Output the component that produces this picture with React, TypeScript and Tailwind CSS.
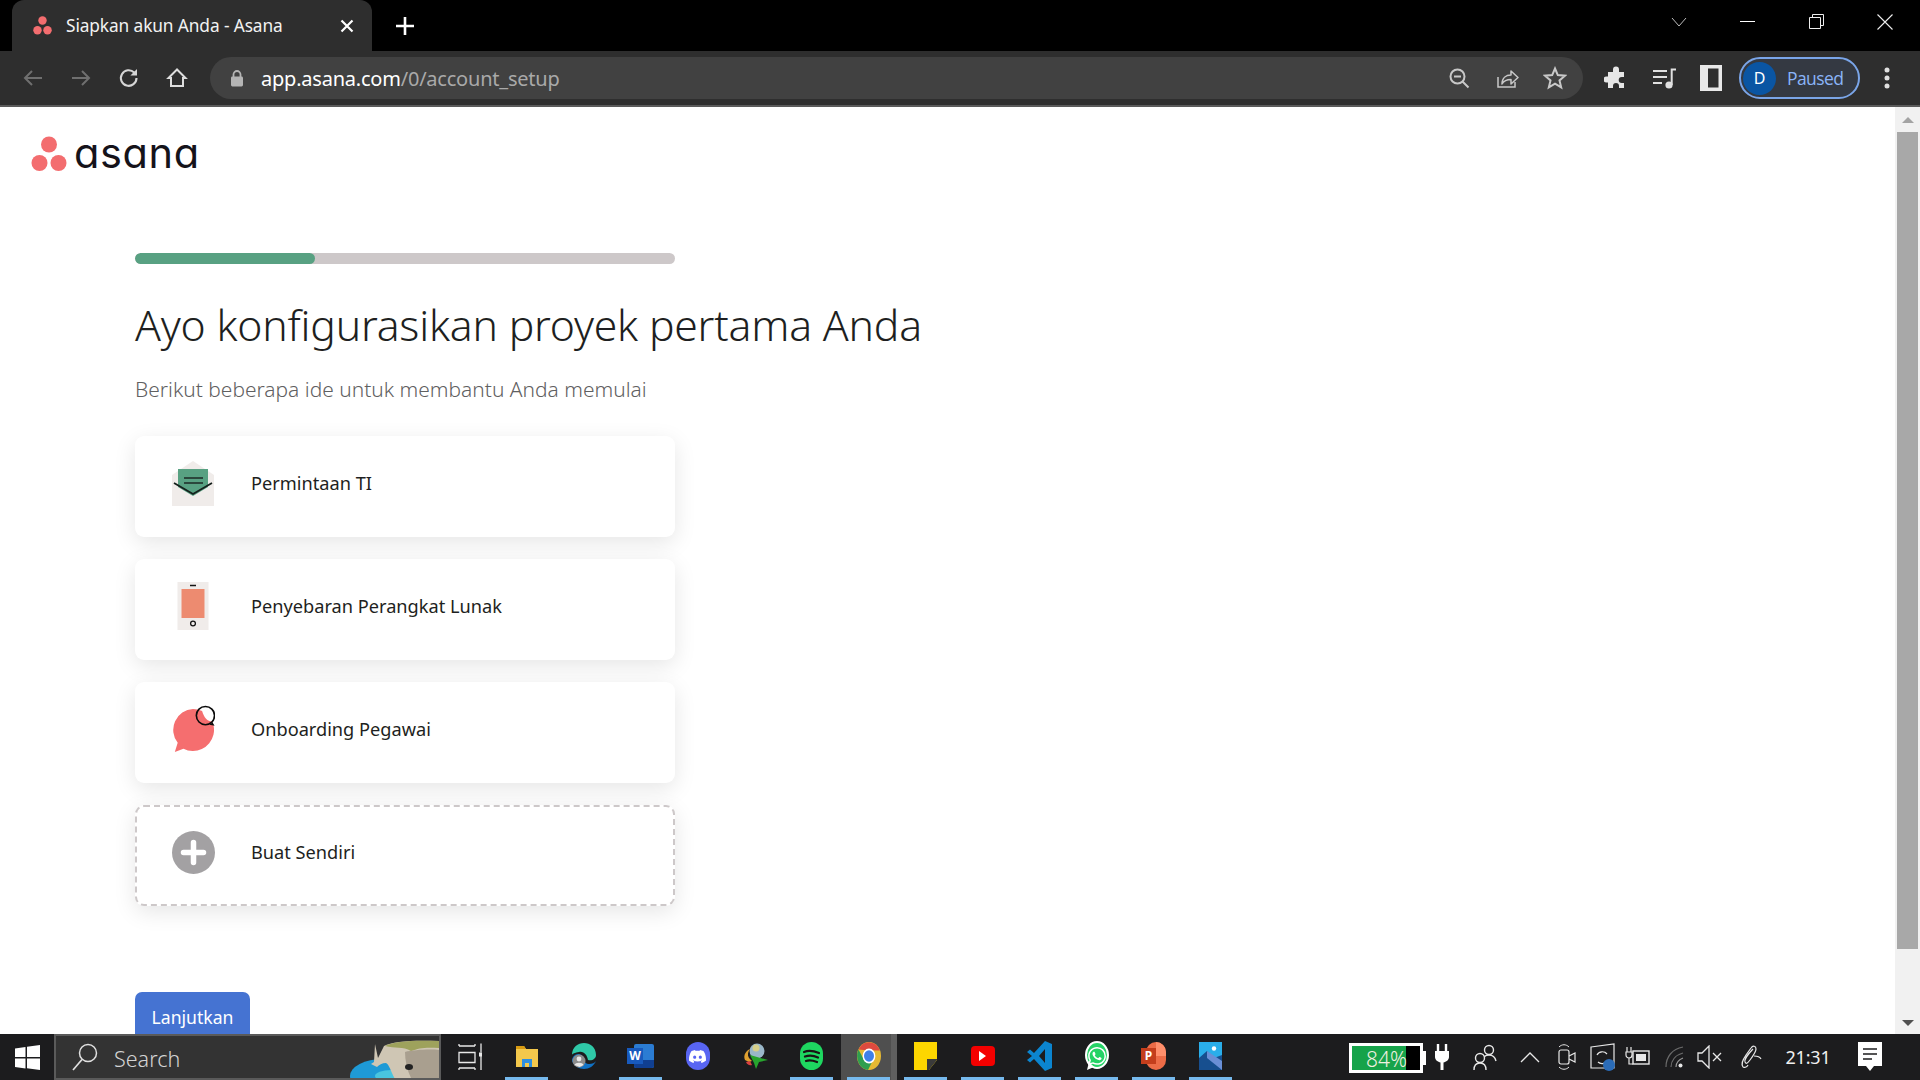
import React from "react";
import { SiDiscord, SiWhatsapp } from "react-icons/si";

const Ic = ({ w = 24, h = 24, vb = "0 0 24 24", children, className = "" }: any) => (
  <svg width={w} height={h} viewBox={vb} fill="none" className={className}>{children}</svg>
);

const Slot = ({ w, children, className = "" }: any) => (
  <div className={`flex items-center justify-center shrink-0 h-full ${className}`} style={{ width: w }}>{children}</div>
);

const AsanaDots = ({ size }: { size: number }) => (
  <svg width={size} height={size} viewBox="0 0 36 36">
    <circle cx="18" cy="8.500" r="8" fill="#f36d6f" />
    <circle cx="8.500" cy="27" r="8" fill="#f36d6f" />
    <circle cx="27.500" cy="27" r="8" fill="#f36d6f" />
  </svg>
);

function TabStrip() {
  return (
    <div className="h-[51px] bg-black flex items-end shrink-0">
      <div className="ml-[12px] w-[360px] h-[51px] bg-[#2e2e2e] rounded-t-[12px] flex items-center pl-[21px] text-white">
        <AsanaDots size={19} />
        <span className="ml-[14px] w-[274px] text-[17.3px] whitespace-nowrap text-[#f2f2f2] tracking-[-0.1px]">Siapkan akun Anda - Asana</span>
        <Ic w={14} h={14} vb="0 0 14 14"><path d="M1.5 1.5l11 11M12.5 1.5l-11 11" stroke="#fff" strokeWidth="2.2" /></Ic>
      </div>
      <div className="h-[51px] flex items-center ml-[24px]">
        <Ic w={18} h={18} vb="0 0 18 18"><path d="M9 0v18M0 9h18" stroke="#fff" strokeWidth="2.6" /></Ic>
      </div>
      <div className="ml-auto h-[51px] flex items-start">
        <Slot w={16} className="!h-[43px] mr-[52px]"><Ic w={16} h={10} vb="0 0 16 10"><path d="M1 1l7 8 7-8" stroke="#bdbdbd" strokeWidth="1" /></Ic></Slot>
        <Slot w={16} className="!h-[43px] mr-[53px]"><div className="w-[15px] h-px bg-white" /></Slot>
        <Slot w={16} className="!h-[43px] mr-[53px]"><Ic w={15} h={15} vb="0 0 15 15"><path d="M.5 3.5h11v11H.5zM3.5 3.5v-3h11v11h-3" stroke="#eee" strokeWidth="1" /></Ic></Slot>
        <Slot w={16} className="!h-[43px] mr-[27px]"><Ic w={16} h={16} vb="0 0 16 16"><path d="M.5.5l15 15M15.5.5l-15 15" stroke="#eee" strokeWidth="1.1" /></Ic></Slot>
      </div>
    </div>
  );
}

function Toolbar() {
  const ic = "#c8c8c8";
  return (
    <div className="h-[56px] bg-[#2e2e2e] border-b-2 border-[#5a5a5a] flex items-center shrink-0">
      <Slot w={48} className="ml-[9px]"><Ic><path d="M21 12H4M11 5l-7 7 7 7" stroke="#6f6f6f" strokeWidth="2" /></Ic></Slot>
      <Slot w={48}><Ic><path d="M3 12h17M13 5l7 7-7 7" stroke="#6f6f6f" strokeWidth="2" /></Ic></Slot>
      <Slot w={48}><Ic><path d="M19.5 12a7.8 7.8 0 1 1-2.3-5.5" stroke="#d6d6d6" strokeWidth="2.1" /><path d="M20 3v6.6h-6.6z" fill="#d6d6d6" /></Ic></Slot>
      <Slot w={48}><Ic><path d="M12 3.5L3.5 12H6v8h12v-8h2.500z" stroke="#dedede" strokeWidth="2" strokeLinejoin="miter" /></Ic></Slot>
      <div className="ml-[9px] w-[1373px] h-[42px] rounded-full bg-[#414141] flex items-center pl-[19px]">
        <Ic w={16} h={18} vb="0 0 16 18"><path d="M4.5 8V5.5a3.5 3.5 0 0 1 7 0V8" stroke="#b4b4b4" strokeWidth="1.8" /><rect x="2" y="7.5" width="12" height="10" rx="1.4" fill="#b4b4b4" /></Ic>
        <span className="ml-[16px] pt-[2px] text-[20px] whitespace-nowrap text-white tracking-[-0.22px]">app.asana.com<span className="text-[#a9a9a9]">/0/account_setup</span></span>
        <div className="ml-auto flex items-center h-full pr-[4px]">
          <Slot w={48}><Ic><circle cx="10.5" cy="10.5" r="7" stroke={ic} strokeWidth="2" /><path d="M7 10.5h7M15.5 15.5l6 6" stroke={ic} strokeWidth="2" /></Ic></Slot>
          <Slot w={48}><Ic className="-mt-[2px]"><path d="M3 12v10h17v-5" stroke={ic} strokeWidth="1.5" /><path d="M7 19c0-6 4-9 9-9V6l7 6.500-7 6.500v-4.500c-4 0-7 1-9 4.500z" stroke={ic} strokeWidth="1.5" strokeLinejoin="round" /></Ic></Slot>
          <Slot w={48}><Ic><path d="M12 2.500l2.800 6.600 7.200.6-5.500 4.700 1.700 7-6.200-3.700-6.200 3.700 1.700-7L2 9.700l7.200-.6z" stroke={ic} strokeWidth="2" /></Ic></Slot>
        </div>
      </div>
      <Slot w={48} className="ml-[9px]"><Ic><path d="M9 3.500a3 3 0 0 1 6 0V6h5v5h-2.300a3 3 0 0 0 0 6H20v5h-5v-2a3 3 0 0 0-6 0v2H4v-5.500H2.500a3 3 0 0 1 0-6H4V6h5z" fill="#e6e6e6" /></Ic></Slot>
      <Slot w={47}><Ic><path d="M1 5h14M1 11h14M1 17h9" stroke="#e0e0e0" strokeWidth="2" /><circle cx="17" cy="19" r="3.600" fill="#e0e0e0" /><path d="M19.700 19V3.500H24" stroke="#e0e0e0" strokeWidth="2" /></Ic></Slot>
      <Slot w={48}><Ic w={22} h={26} vb="0 0 22 26"><path d="M0 0h22v26H0zM8 3.500v19h10.500v-19z" fill="#e8e8e8" fillRule="evenodd" /></Ic></Slot>
      <div className="ml-[4px] w-[121px] h-[42px] rounded-full border-2 border-[#7aa5e8] bg-[#343942] flex items-center pl-[2px] shrink-0">
        <div className="w-[33px] h-[33px] rounded-full bg-[#0a55a3] text-white text-[16px] flex items-center justify-center">D</div>
        <span className="ml-[11px] text-[#8ab4f8] text-[17.5px] font-['Open_Sans',sans-serif] tracking-[-0.6px]">Paused</span>
      </div>
      <Slot w={54}>
        <Ic w={6} h={24} vb="0 0 6 24"><circle cx="3" cy="4" r="2.500" fill="#e0e0e0" /><circle cx="3" cy="12" r="2.500" fill="#e0e0e0" /><circle cx="3" cy="20" r="2.500" fill="#e0e0e0" /></Ic>
      </Slot>
    </div>
  );
}

const CardShell = ({ dashed, title, icon }: any) => (
  <div className={`w-[540px] h-[101px] rounded-[9px] bg-white flex items-start shadow-[0_6px_22px_rgba(0,0,0,0.10)] ${dashed ? "border-2 border-dashed border-[#cdc8c9] pl-[34px]" : "pl-[36px]"}`}>
    <div className={`w-[44px] h-[44px] flex items-center justify-center ${dashed ? "mt-[23px]" : "mt-[25px]"}`}>{icon}</div>
    <span className={`ml-[36px] text-[18.2px] font-normal text-[#1e1f21] whitespace-nowrap ${dashed ? "mt-[32px]" : "mt-[34px]"}`}>{title}</span>
  </div>
);

const EnvelopeIcon = () => (
  <Ic w={44} h={48} vb="0 0 44 48">
    <path d="M1 16L22 2l21 14v31H1z" fill="#f0ecea" />
    <rect x="7" y="10" width="30" height="18" fill="#58a182" />
    <path d="M7 28l15 9 15-9z" fill="#58a182" />
    <path d="M13 19h19M13 24h19" stroke="#1c2a26" strokeWidth="1.600" />
    <path d="M3 24l19 11 19-11" stroke="#15201c" strokeWidth="1.800" fill="none" />
  </Ic>
);
const PhoneIcon = () => (
  <Ic w={32} h={48} vb="0 0 32 48">
    <rect x="0.500" y="0" width="31" height="48" fill="#f0ecea" />
    <rect x="4.500" y="7" width="23" height="29" fill="#ed8b70" />
    <path d="M13 3.500h6" stroke="#151515" strokeWidth="1.500" />
    <circle cx="16" cy="41.500" r="2.400" stroke="#151515" strokeWidth="1.300" />
  </Ic>
);
const ChatIcon = () => (
  <Ic w={46} h={50} vb="0 0 46 50">
    <path d="M23 4a22 22 0 1 1-10 41.600L4 49l3-9.500A22 22 0 0 1 23 4z" fill="#f56e6f" />
    <path d="M36 2a9 9 0 0 1 7 15l-2 0c-4-1-8-6-9-14z" fill="#fff" />
    <circle cx="36" cy="11" r="9.500" stroke="#0b0b0b" strokeWidth="1.700" />
    <path d="M42.500 18l1.500 2.500-3.500-.8" stroke="#0b0b0b" strokeWidth="1.500" fill="none" />
  </Ic>
);
const PlusIcon = () => (
  <Ic w={43} h={43} vb="0 0 43 43">
    <circle cx="21.500" cy="21.500" r="21.500" fill="#a3a1a3" />
    <path d="M21.500 11.500v20M11.500 21.500h20" stroke="#fff" strokeWidth="5.500" strokeLinecap="round" />
  </Ic>
);

function Page() {
  return (
    <div className="flex-1 min-h-0 flex overflow-hidden bg-white">
      <div className="flex-1 min-w-0 font-['Noto_Sans',sans-serif]">
        <div className="flex items-center h-[94px] pl-[31px]">
          <AsanaDots size={36} />
          <span className="ml-[7px] text-[41.500px] leading-none font-normal font-['Inter',sans-serif] text-[#15131a] [font-feature-settings:'cv11'] tracking-[0.6px]">asana</span>
        </div>
        <div className="pl-[135px] pt-[52px]">
          <div className="w-[540px] h-[11px] rounded-full bg-[#cdc8c9] overflow-hidden">
            <div className="w-[180px] h-full rounded-full bg-[#58a182]" />
          </div>
          <h1 className="mt-[33px] text-[42.700px] leading-[56px] font-light tracking-[-0.2px] text-[#1e1f21] whitespace-nowrap">Ayo konfigurasikan proyek pertama Anda</h1>
          <p className="mt-[22px] text-[20.950px] leading-[28px] font-light text-[#5f6061] whitespace-nowrap">Berikut beberapa ide untuk membantu Anda memulai</p>
          <div className="mt-[33px] flex flex-col gap-[22px]">
            <CardShell title="Permintaan TI" icon={<EnvelopeIcon />} />
            <CardShell title="Penyebaran Perangkat Lunak" icon={<PhoneIcon />} />
            <CardShell title="Onboarding Pegawai" icon={<ChatIcon />} />
            <CardShell dashed title="Buat Sendiri" icon={<PlusIcon />} />
          </div>
          <button className="mt-[86px] w-[115px] h-[48px] pt-[2px] rounded-[7px] bg-[#4573d2] text-white text-[17.600px] font-normal">Lanjutkan</button>
        </div>
      </div>
      <div className="w-[25px] shrink-0 bg-[#f1f1f1] flex flex-col items-center">
        <div className="h-[25px] flex items-center justify-center">
          <div className="w-0 h-0 border-x-[6px] border-x-transparent border-b-[6px] border-b-[#a3a3a3]" />
        </div>
        <div className="w-[21px] h-[817px] bg-[#a8a8a8]" />
        <div className="flex-1 flex items-end justify-center pb-[8px]">
          <div className="w-0 h-0 border-x-[6px] border-x-transparent border-t-[6px] border-t-[#505050]" />
        </div>
      </div>
    </div>
  );
}

const AppSlot = ({ on, active, children }: any) => (
  <div className="relative w-[57px] h-full flex items-center justify-center shrink-0">
    {active && <div className="absolute inset-y-0 left-[1px] right-0 bg-[#4f4f4f]"><div className="absolute inset-y-0 right-0 w-[6px] bg-[#5f5f5f]" /></div>}
    <div className="relative pb-[2px] flex items-center justify-center">{children}</div>
    {on && <div className="absolute bottom-0 left-[7px] w-[43px] h-[3px] bg-[#76b9ed]" />}
  </div>
);

function Taskbar() {
  const w = "#e8e8e8";
  return (
    <div className="h-[46px] bg-[#1c1c1e] flex items-stretch shrink-0 font-['Noto_Sans',sans-serif]">
      <Slot w={54}>
        <Ic w={25} h={25} vb="0 0 25 25"><path d="M0 3.500l10.500-1.500v10H0zM12 1.800L25 0v12H12zM0 13.500h10.500v10L0 22zM12 13.500h13V25l-13-1.800z" fill="#fff" /></Ic>
      </Slot>
      <div className="relative w-[387px] h-full border-2 border-[#5a5a5a] bg-[#333333] flex items-center overflow-hidden">
        <div className="ml-[16px]"><Ic w={26} h={28} vb="0 0 26 28"><circle cx="16" cy="10" r="8.500" stroke="#e0e0e0" strokeWidth="1.500" /><path d="M10 16.500L1 27" stroke="#e0e0e0" strokeWidth="1.700" /></Ic></div>
        <span className="ml-[16px] pt-[4px] text-[21.500px] text-[#d4d4d4] font-light">Search</span>
        <div className="absolute right-0 top-0 bottom-0">
          <svg width="90" height="42" viewBox="0 0 90 42">
            <ellipse cx="34" cy="40" rx="33" ry="17" fill="#1e9ad6" />
            <ellipse cx="42" cy="40" rx="16" ry="6" fill="#49c5df" />
            <path d="M22 28l3-2 1-18 3 14 6-12c8-5 30-6 55-5v38H46C42 36 40 28 37 27c-4 0-7 2-9 4z" fill="#cfc6b4" />
            <path d="M36 10c8-5 30-6 54-5v7c-14-1-20 0-28 3-8-5-16-2-26-5z" fill="#9ea25c" />
            <path d="M56 16c8-2 24-3 34-2v28H62c-4-8-6-18-6-26z" fill="#8f8577" opacity="0.6" />
            <ellipse cx="60" cy="31" rx="4" ry="3" fill="#222" />
          </svg>
        </div>
      </div>
      <Slot w={57}>
        <Ic w={24} h={28} vb="0 0 24 28"><path d="M1 3h16M1 9.500h16v10H1zM1 25h16M1 27v-2M17 27v-2M1 3V1M17 3V1M23 .5v9M23 13v14" stroke={w} strokeWidth="1.300" /><rect x="21" y="9.500" width="4" height="4" fill={w} /></Ic>
      </Slot>
      <AppSlot on>
        <Ic w={24} h={24} vb="0 0 24 24"><path d="M1 2h8l2 3h12v18H1z" fill="#f4c84c" /><path d="M1 2h8l2 3H1z" fill="#d89b12" /><path d="M7 23v-8h10v8h-3v-4h-4v4z" fill="#2f8fe0" /></Ic>
      </AppSlot>
      <AppSlot>
        <svg width="26" height="28" viewBox="0 0 26 28">
          <path d="M1 13C1 5 7 1 13 1s12 4 12 12c0 4-4 6-8 5-1-5-4-9-9-8-4 .5-7 2-7 3z" fill="#2fc9a8" />
          <path d="M13 27c-5 0-10-3-12-8 0-4 3-7 6-7s6 2 6 6c0 2 2 4 5 4s6-1 7-3c-2 5-7 8-12 8z" fill="#1072c6" />
          <circle cx="8" cy="19" r="6.500" fill="#8c8c8c" /><circle cx="8" cy="17" r="2.400" fill="#e8e8e8" /><path d="M3.500 23c1-3 8-3 9 0l-4 2z" fill="#e8e8e8" />
        </svg>
      </AppSlot>
      <AppSlot on>
        <div className="relative w-[27px] h-[24px]">
          <div className="absolute right-0 top-0 w-[20px] h-[24px] rounded-[2px] bg-[#2b7cd3] overflow-hidden"><div className="absolute left-0 right-0 top-[16px] h-[8px] bg-[#103f91]" /></div>
          <div className="absolute left-0 top-[4px] w-[16px] h-[16px] bg-[#185abd] text-white text-[12px] leading-[16px] font-bold text-center">W</div>
        </div>
      </AppSlot>
      <AppSlot>
        <div className="w-[24px] h-[28px] rounded-full bg-[#5865f2] flex items-center justify-center"><SiDiscord color="#fff" size={17} /></div>
      </AppSlot>
      <AppSlot>
        <svg width="26" height="28" viewBox="0 0 26 28">
          <circle cx="15" cy="9" r="7.500" fill="#9ab7c9" /><circle cx="14" cy="6" r="3.500" fill="#d6cf8a" />
          <path d="M3 18c-2-5 1-9 5-11-2 3-3 6-1 9l3 3-3 1z" fill="#e0a030" /><path d="M4 20c1 2 3 4 6 3l-2-4z" fill="#d94040" />
          <path d="M8 13l18 5-9 2-3 7-2-6z" fill="#27a52e" />
        </svg>
      </AppSlot>
      <AppSlot on>
        <div className="w-[23px] h-[28px] rounded-full bg-[#1ed760] flex items-center justify-center overflow-hidden">
          <svg width="17" height="15" viewBox="0 0 17 15"><path d="M1 3c5-2 10-1 15 1M2 7.500c4-1.500 9-1 13 1M3 12c3-1 7-.5 11 1" stroke="#191414" strokeWidth="2.200" fill="none" strokeLinecap="round" /></svg>
        </div>
      </AppSlot>
      <AppSlot on active>
        <svg width="24" height="28" viewBox="0 0 24 28">
          <ellipse cx="12" cy="14" rx="12" ry="14" fill="#e6b933" />
          <path d="M1.500 7.500A12 14 0 0 1 23 8.500H12z" fill="#dd4a3f" />
          <path d="M1.500 7.500A12 14 0 0 0 11 28l5-10-9 0z" fill="#2f9e4f" />
          <ellipse cx="12" cy="14" rx="6.400" ry="7.400" fill="#fff" />
          <ellipse cx="12" cy="14" rx="5" ry="5.800" fill="#3f7fe8" />
        </svg>
      </AppSlot>
      <AppSlot on>
        <svg width="23" height="28" viewBox="0 0 23 28"><path d="M0 0h23v18l-8 10H0z" fill="#fdd600" /><path d="M13 28V17h10v1l-8 10z" fill="#3a3a3a" /></svg>
      </AppSlot>
      <AppSlot on>
        <div className="w-[24px] h-[20px] rounded-[4px] bg-[#f40000] flex items-center justify-center">
          <div className="w-0 h-0 border-y-[5px] border-y-transparent border-l-[7px] border-l-white" />
        </div>
      </AppSlot>
      <AppSlot on>
        <svg width="25" height="30" viewBox="0 0 25 30"><path d="M18 0l7 3v24l-7 3L7 18l-4 3.500L0 19l5-4-5-4 3-2.500L7 12z" fill="#0b85d0" /><path d="M18 8l-6 7 6 7z" fill="#1c1c1e" /></svg>
      </AppSlot>
      <AppSlot on>
        <div className="relative w-[25px] h-[30px] flex items-center justify-center">
          <svg width="25" height="30" viewBox="0 0 25 30" className="absolute"><ellipse cx="13" cy="14" rx="11" ry="13" fill="#25d366" stroke="#fff" strokeWidth="2" /><path d="M3 29l2-8 5 5z" fill="#fff" /></svg>
          <SiWhatsapp color="#fff" size={18} className="absolute" />
        </div>
      </AppSlot>
      <AppSlot on>
        <div className="relative w-[25px] h-[28px]">
          <div className="absolute right-0 top-0 w-[20px] h-[28px] rounded-full bg-[#ed6c47]"><div className="absolute right-0 top-0 w-[10px] h-[14px] rounded-tr-full bg-[#ff8f6b]" /></div>
          <div className="absolute left-0 top-[6px] w-[15px] h-[16px] bg-[#c43e1c] text-white text-[12px] leading-[16px] font-bold text-center">P</div>
        </div>
      </AppSlot>
      <AppSlot on>
        <svg width="23" height="28" viewBox="0 0 23 28"><rect width="23" height="28" fill="#2aaeea" /><path d="M0 28V16l8-7 7 7 8-3v15z" fill="#174f8f" /><path d="M8 9l15 10v9l-15-12z" fill="#6a8fd6" /><circle cx="15" cy="6.500" r="2.200" fill="#fff" /></svg>
      </AppSlot>

      <div className="ml-[110px] flex items-center h-full pt-[1px]">
        <div className="flex items-center">
          <div className="relative w-[74px] h-[30px] border-[3px] border-white bg-black text-[#f0f0e0] overflow-hidden">
            <div className="absolute left-0 top-0 bottom-0 w-[54px] bg-[#16a34a]" />
            <span className="absolute left-[14px] top-[1px] text-[21px] leading-[24px] font-light whitespace-nowrap">84%</span>
          </div>
          <div className="w-[3px] h-[14px] bg-white" />
        </div>
      </div>
      <Slot w={32}><Ic w={14} h={28} vb="0 0 14 28"><path d="M3 1v8M11 1v8" stroke="#fff" strokeWidth="2.400" /><path d="M0 8h14v6c0 3-3 5-5.500 5.500V27h-3v-7.500C3 19 0 17 0 14z" fill="#fff" /></Ic></Slot>
      <Slot w={54}><Ic w={24} h={28} vb="0 0 24 28"><circle cx="16" cy="7" r="4.500" stroke={w} strokeWidth="1.400" /><path d="M10 18c0-4 2-6 6-6s6 2 7 6" stroke={w} strokeWidth="1.400" /><circle cx="7" cy="15" r="4.500" fill="#1c1c1e" stroke={w} strokeWidth="1.400" /><path d="M1 27c0-5 2-7 6-7s6 2 6 7" stroke={w} strokeWidth="1.400" /></Ic></Slot>
      <Slot w={36}><Ic w={20} h={12} vb="0 0 20 12"><path d="M1 11l9-9 9 9" stroke={w} strokeWidth="1.300" /></Ic></Slot>
      <Slot w={38}><Ic w={18} h={28} vb="0 0 18 28"><rect x="1" y="7" width="10" height="14" rx="2" stroke={w} strokeWidth="1.200" /><path d="M11 13l6-3v9l-6-3" stroke={w} strokeWidth="1.200" /><path d="M1 4c3-3 7-3 10 0M1 24c3 3 7 3 10 0" stroke={w} strokeWidth="1" /></Ic></Slot>
      <Slot w={34}>
        <svg width="26" height="32" viewBox="0 0 26 32"><path d="M1 6l23-3v24H1z" stroke={w} strokeWidth="1.200" fill="none" /><path d="M7 14a6 6 0 0 1 10-1M17 20a6 6 0 0 1-9 1" stroke={w} strokeWidth="1.200" fill="none" /><circle cx="19" cy="24" r="6" fill="#2b6cb8" /></svg>
      </Slot>
      <Slot w={36}>
        <Ic w={26} h={24} vb="0 0 26 24"><rect x="8" y="6" width="16" height="13" stroke={w} strokeWidth="1.400" /><rect x="11" y="9" width="10" height="7" fill={w} /><path d="M2 2v5M6 2v5M1 7h6v3a3 3 0 0 1-6 0zM4 13v6h4" stroke={w} strokeWidth="1.200" /></Ic>
      </Slot>
      <Slot w={36}>
        <Ic w={20} h={22} vb="0 0 20 22"><path d="M2 21C2 11 8 3 19 1M7 21c0-6 4-12 12-14" stroke="#6b6b6b" strokeWidth="1.200" /><path d="M12 21c0-3 2-7 7-9" stroke="#9a9a9a" strokeWidth="1.200" /><circle cx="16.500" cy="19.500" r="2" fill={w} /></Ic>
      </Slot>
      <Slot w={36}>
        <Ic w={26} h={24} vb="0 0 26 24"><path d="M1 8h4l7-7v22l-7-7H1z" stroke={w} strokeWidth="1.300" /><path d="M16 8l8 8M24 8l-8 8" stroke={w} strokeWidth="1.300" /></Ic>
      </Slot>
      <Slot w={46}>
        <Ic w={22} h={26} vb="0 0 22 26"><path d="M3 23c-2-3-1-6 3-12l5-7c2-3 5-2 5 1s-3 7-6 11-4 4-5 2 3-8 8-13M3 23c2 1 4 0 5-2M14 12c3 0 6 1 7 3" stroke={w} strokeWidth="1.200" /></Ic>
      </Slot>
      <Slot w={68}><span className="text-[18px] text-[#f0f0f0] tracking-[-0.2px]">21:31</span></Slot>
      <Slot w={56}>
        <svg width="24" height="30" viewBox="0 0 24 30"><path d="M0 0h24v24h-8l-4 5-4-5H0z" fill="#fff" /><path d="M5 7h14M5 12h14M5 17h9" stroke="#1c1c1e" strokeWidth="1.400" /></svg>
      </Slot>
    </div>
  );
}

export default function App() {
  return (
    <div className="w-[1920px] h-[1080px] flex flex-col overflow-hidden bg-white font-['Noto_Sans',sans-serif]">
      <TabStrip />
      <Toolbar />
      <Page />
      <Taskbar />
    </div>
  );
}
